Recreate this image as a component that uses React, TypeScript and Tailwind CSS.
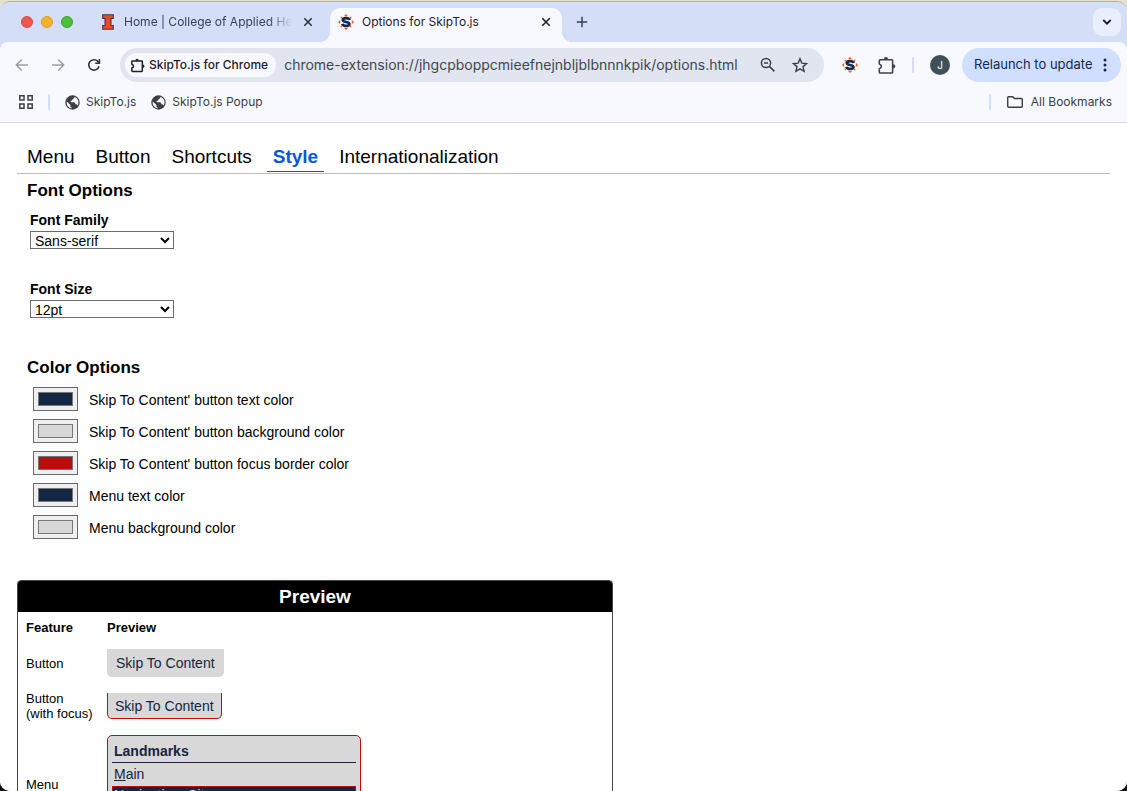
import React from 'react';

const CHROME_FONT = "font-['Inter','Roboto',sans-serif]";
const PAGE_FONT = "font-['Liberation_Sans',Arial,sans-serif]";

function SkipToLogo() {
  return (
    <svg viewBox="0 0 16 16" className="size-4 shrink-0" aria-hidden="true">
      <g fill="#ff5f05">
        <path d="M8 0 L10.200 2.200 H5.800 Z" />
        <path d="M8 16 L10.200 13.800 H5.800 Z" />
        <path d="M0 8 L2.200 5.800 V10.200 Z" />
        <path d="M16 8 L13.800 5.800 V10.200 Z" />
        <path d="M2.600 2.800h1.400v1.400H2.600zM12 2.800h1.400v1.400H12zM2.600 11.800h1.400v1.400H2.600zM12 11.800h1.400v1.400H12z" />
      </g>
      <path
        d="M11.600 6C11.300 4.700 10 4.200 8 4.200 6 4.200 4.800 4.800 4.800 6c0 2.700 6.600 1.200 6.600 4 0 1.200-1.500 1.900-3.400 1.900-2.100 0-3.300-.7-3.700-2"
        fill="none"
        stroke="#13294b"
        strokeWidth="2.700"
      />
    </svg>
  );
}

function IllinoisLogo() {
  return (
    <svg viewBox="0 0 12 16" className="h-4 w-3 shrink-0" aria-hidden="true">
      <path
        d="M.7.7h10.600v3.800H9v7h2.300v3.800H.7v-3.800H3v-7H.7z"
        fill="#e84a27"
        stroke="#3d3a55"
        strokeWidth="1.100"
      />
    </svg>
  );
}

function PuzzleIcon({ className, width }: { className: string; width: number }) {
  return (
    <svg viewBox="0 0 18 18" className={className} fill="none" stroke="currentColor" strokeWidth={width} aria-hidden="true">
      <path
        d="M3 3.500h11q.8 0 .8.800v11q0 .8-.8.800H3q-.8 0-.8-.8v-3.200q2-.6 2-2.300t-2-2.300V4.300q0-.8.800-.8z"
        strokeLinejoin="round"
      />
      <path d="M6.500 3.200a2 2.200 0 0 1 4 0zM15.200 7.800a2.200 2 0 0 1 0 4z" fill="currentColor" stroke="none" />
    </svg>
  );
}

function GlobeIcon() {
  return (
    <svg viewBox="0 0 16 16" className="size-[15px] shrink-0" aria-hidden="true">
      <circle cx="8" cy="8" r="7.700" fill="#3b3e44" />
      <path
        d="M9.900 1.900c.3 1.500-.6 2.300-1.800 2.500-.3 1.200-.8 1.600-2 1.700v1.700H9.500c1.100 0 1.500.8 1.500 2h1.200l1.200 1.500a6.300 6.300 0 0 0-3.500-9.400zM1.900 6.800l3.900 3.900v1.300c0 .8.600 1.300 1.300 1.400v1A6.300 6.300 0 0 1 1.900 6.800z"
        fill="#f8f9ff"
      />
    </svg>
  );
}

function CloseIcon() {
  return (
    <svg viewBox="0 0 10 10" className="size-[10px]" stroke="currentColor" strokeWidth="1.600" aria-hidden="true">
      <path d="M1.300 1.300l7.400 7.400M8.700 1.300L1.300 8.700" />
    </svg>
  );
}

function TabStrip() {
  return (
    <header className="flex h-10 shrink-0 items-end bg-[#d4def6] pl-[21px] pr-[6px] text-xs">
      <div className="flex h-10 items-center gap-2">
        <button aria-label="Close window" className="size-3 rounded-full border border-[#dd4a43] bg-[#ed5750]" />
        <button aria-label="Minimize window" className="size-3 rounded-full border border-[#dd9a20] bg-[#f5b32d]" />
        <button aria-label="Zoom window" className="size-3 rounded-full border border-[#3aa52c] bg-[#4cc038]" />
      </div>
      <div className="ml-[29px] flex h-10 w-[228px] items-center">
        <IllinoisLogo />
        <span className="ml-[10px] w-[168px] overflow-hidden whitespace-nowrap text-[#3b4154] [mask-image:linear-gradient(to_right,black_86%,transparent)]">
          Home | College of Applied Health
        </span>
        <button aria-label="Close tab" className="ml-[11px] text-[#30343c]">
          <CloseIcon />
        </button>
      </div>
      <div className="relative flex h-[34px] w-[232px] items-center rounded-t-[10px] bg-[#f8f9ff] pb-[6px] pl-2 pr-[11px] before:absolute before:-left-[10px] before:bottom-0 before:size-[10px] before:bg-[radial-gradient(circle_at_0_0,transparent_10px,#f8f9ff_10px)] after:absolute after:-right-[10px] after:bottom-0 after:size-[10px] after:bg-[radial-gradient(circle_at_100%_0,transparent_10px,#f8f9ff_10px)]">
        <SkipToLogo />
        <span className="ml-2 flex-1 whitespace-nowrap text-[#1f2127]">Options for SkipTo.js</span>
        <button aria-label="Close tab" className="text-[#1f2127]">
          <CloseIcon />
        </button>
      </div>
      <div className="flex h-10 flex-1 items-center justify-between pl-[14px]">
        <button aria-label="New tab" className="text-[#3b4154]">
          <svg viewBox="0 0 12 12" className="size-3" stroke="currentColor" strokeWidth="1.500" aria-hidden="true">
            <path d="M6 .8v10.400M.8 6h10.400" />
          </svg>
        </button>
        <button aria-label="Search tabs" className="flex size-7 items-center justify-center rounded-[9px] bg-[#e9effd] text-[#1a1c22]">
          <svg viewBox="0 0 10 8" className="h-2 w-[10px]" fill="none" stroke="currentColor" strokeWidth="1.800" aria-hidden="true">
            <path d="M1.300 2L5 5.700 8.700 2" />
          </svg>
        </button>
      </div>
    </header>
  );
}

function ArrowIcon({ back }: { back?: boolean }) {
  return (
    <svg viewBox="0 0 14 14" className="size-[14px]" fill="none" stroke="currentColor" strokeWidth="1.500" aria-hidden="true">
      {back ? <path d="M13 7H1.500M6.800 1.500L1.300 7l5.500 5.500" /> : <path d="M1 7h11.500M7.200 1.500L12.700 7l-5.500 5.500" />}
    </svg>
  );
}

function Toolbar() {
  return (
    <div className="flex h-[46px] items-center pl-[15px] pr-[6px]">
      <div className="flex gap-[22px]">
        <button aria-label="Back" className="text-[#9c9ea5]"><ArrowIcon back /></button>
        <button aria-label="Forward" className="text-[#9c9ea5]"><ArrowIcon /></button>
        <button aria-label="Reload" className="text-[#30343c]">
          <svg viewBox="0 0 14 14" className="size-[14px]" fill="none" stroke="currentColor" strokeWidth="1.600" aria-hidden="true">
            <path d="M12 8.200A5.200 5.200 0 1 1 10.800 3.400L12.200 4.900" />
            <path d="M12.400 1v4.200H8.200" />
          </svg>
        </button>
      </div>
      <div className="ml-[19px] flex h-[34px] min-w-0 flex-1 items-center rounded-full bg-[#e1e5f0] pl-[5px] pr-4">
        <button className="flex h-6 shrink-0 items-center gap-1 rounded-full bg-[#f8f9ff] pl-[5px] pr-2 text-xs font-medium whitespace-nowrap text-[#1f2127]">
          <PuzzleIcon className="size-[15px]" width={1.8} />
          SkipTo.js for Chrome
        </button>
        <input
          aria-label="Address"
          readOnly
          value="chrome-extension://jhgcpboppcmieefnejnbljblbnnnkpik/options.html"
          className="ml-2 min-w-0 flex-1 bg-transparent text-sm text-[#43474f] outline-none"
        />
        <div className="ml-4 flex gap-4 text-[#3b3e44]">
          <button aria-label="Page zoom">
            <svg viewBox="0 0 16 16" className="size-4" fill="none" stroke="currentColor" strokeWidth="1.500" aria-hidden="true">
              <circle cx="6" cy="6" r="4.600" />
              <path d="M9.400 9.400l5 5M4 6h4" />
            </svg>
          </button>
          <button aria-label="Bookmark this page">
            <svg viewBox="0 0 16 16" className="size-4" fill="none" stroke="currentColor" strokeWidth="1.400" aria-hidden="true">
              <path d="M8 1.700l1.800 4.400 4.800.4-3.600 3.100 1.100 4.700L8 11.800l-4.100 2.500L5 9.600 1.400 6.500l4.800-.4z" />
            </svg>
          </button>
        </div>
      </div>
      <div className="ml-[18px] flex shrink-0 items-center">
        <button aria-label="SkipTo.js"><SkipToLogo /></button>
        <button aria-label="Extensions" className="ml-[19px] text-[#3b4154]">
          <PuzzleIcon className="size-[19px]" width={1.5} />
        </button>
        <span className="ml-[16px] h-4 w-0.5 rounded bg-[#d0dfff]" />
        <button aria-label="Profile" className="ml-4 size-5 rounded-full bg-[#3f5059] text-[10px] text-white">J</button>
        <button className="ml-3 flex h-[34px] w-[159px] items-center justify-between rounded-full bg-[#d0deff] pl-3 pr-[14px] text-[13px] whitespace-nowrap text-[#14284e]">
          Relaunch to update
          <svg viewBox="0 0 4 14" className="h-[14px] w-1" fill="currentColor" aria-hidden="true">
            <circle cx="2" cy="2" r="1.500" />
            <circle cx="2" cy="7" r="1.500" />
            <circle cx="2" cy="12" r="1.500" />
          </svg>
        </button>
      </div>
    </div>
  );
}

function BookmarksBar() {
  return (
    <nav aria-label="Bookmarks" className="flex h-[34px] items-start pl-[19px] pr-[15px] text-xs leading-4 text-[#3b3e44]">
      <div className="flex h-7 flex-1 items-center">
        <button aria-label="Tab groups">
          <svg viewBox="0 0 14 14" className="size-[14px]" fill="none" stroke="currentColor" strokeWidth="1.500" aria-hidden="true">
            <path d="M.8.8h4.200v4.200H.8zM9 .8h4.200v4.200H9zM.8 9h4.200v4.200H.8zM9 9h4.200v4.200H9z" />
          </svg>
        </button>
        <span className="ml-[15px] h-4 w-0.5 rounded bg-[#d0dfff]" />
        <a href="#skipto" className="ml-[15px] flex items-center gap-[6px]"><GlobeIcon />SkipTo.js</a>
        <a href="#popup" className="ml-[15px] flex items-center gap-[6px]"><GlobeIcon />SkipTo.js Popup</a>
      </div>
      <div className="flex h-7 items-center">
        <span className="h-4 w-0.5 rounded bg-[#d0dfff]" />
        <a href="#all" className="ml-4 flex items-center gap-2">
          <svg viewBox="0 0 16 12" className="h-3 w-4" fill="none" stroke="currentColor" strokeWidth="1.400" aria-hidden="true">
            <path d="M1.500.8h4.300l1.600 1.700h7q.9 0 .9.900v6.900q0 .9-.9.900h-12.800q-.9 0-.9-.9V1.700q0-.9.800-.9z" />
          </svg>
          All Bookmarks
        </a>
      </div>
    </nav>
  );
}

const TABS = ['Menu', 'Button', 'Shortcuts', 'Style', 'Internationalization'];

const COLORS = [
  { id: 'button-text', label: "Skip To Content' button text color", value: '#142643' },
  { id: 'button-background', label: "Skip To Content' button background color", value: '#d8d8d8' },
  { id: 'button-focus', label: "Skip To Content' button focus border color", value: '#c00b0d' },
  { id: 'menu-text', label: 'Menu text color', value: '#142643' },
  { id: 'menu-background', label: 'Menu background color', value: '#d8d8d8' },
];

function SelectField({ id, label, options }: { id: string; label: string; options: string[] }) {
  return (
    <div className="flex flex-col items-start">
      <label htmlFor={id} className="text-sm leading-[22px] font-bold">{label}</label>
      <select id={id} className="h-[18px] w-36 border border-[#6b6b6b] bg-white text-sm leading-4">
        {options.map((option) => <option key={option}>{option}</option>)}
      </select>
    </div>
  );
}

function Preview() {
  return (
    <section className="mt-[41px] w-[596px] max-w-full rounded-[4px] border border-[#444]">
      <h2 className="rounded-t-[3px] bg-black text-center text-[19px] leading-[31px] font-bold text-white">Preview</h2>
      <table className="w-full text-left text-[13px] leading-[15px]">
        <thead>
          <tr className="h-[31px]">
            <th scope="col" className="w-[89px] pl-2">Feature</th>
            <th scope="col">Preview</th>
          </tr>
        </thead>
        <tbody>
          <tr className="h-[40px]">
            <td className="pl-2">Button</td>
            <td>
              <button className="block h-7 rounded-b-[5px] bg-[#d8d8d8] px-[9px] text-sm text-[#142643]">Skip To Content</button>
            </td>
          </tr>
          <tr className="h-[46px]">
            <td className="pl-2">Button<br />(with focus)</td>
            <td>
              <button className="block h-[26px] rounded-b-[5px] border border-t-0 border-[#c00b0d] bg-[#d8d8d8] px-[7px] text-sm text-[#142643]">
                Skip To Content
              </button>
            </td>
          </tr>
          <tr className="h-[110px]">
            <td className="pl-2">Menu</td>
            <td>
              <div className="h-[98px] w-[254px] rounded-[5px] border border-[#c00b0d] bg-[#d8d8d8] p-1 text-sm text-[#142643]">
                <div className="border-b border-[#142643] px-0.5 py-px leading-5 font-bold">Landmarks</div>
                <div className="px-0.5 leading-[23px]"><u>M</u>ain</div>
                <div className="border border-[#c00b0d] bg-[#142643] px-px leading-4 text-[#d8d8d8]"><u>N</u>avigation: Site</div>
              </div>
            </td>
          </tr>
        </tbody>
      </table>
    </section>
  );
}

function OptionsPage() {
  return (
    <main className={`min-h-0 flex-1 overflow-hidden bg-white px-[17px] pt-5 text-black ${PAGE_FONT}`}>
      <div role="tablist" className="flex gap-[9px] border-b border-[#bdbdbd] pb-px pl-1 text-[19px] leading-7">
        {TABS.map((tab) => (
          <button
            key={tab}
            role="tab"
            aria-selected={tab === 'Style'}
            className={tab === 'Style' ? 'border-b border-[#0557e0] px-[6px] font-bold text-[#0557e0]' : 'border-b border-transparent px-[6px]'}
          >
            {tab}
          </button>
        ))}
      </div>
      <h2 className="mt-[7px] pl-[10px] text-[17px] leading-5 font-bold">Font Options</h2>
      <div className="mt-2 flex flex-col gap-[29px] pl-[13px]">
        <SelectField id="font-family" label="Font Family" options={['Sans-serif', 'Serif', 'Monospace']} />
        <SelectField id="font-size" label="Font Size" options={['12pt', '14pt', '16pt']} />
      </div>
      <h2 className="mt-10 pl-[10px] text-[17px] leading-5 font-bold">Color Options</h2>
      <div className="mt-[9px] flex flex-col gap-2 pl-4">
        {COLORS.map((color) => (
          <div key={color.id} className="flex items-end gap-[11px]">
            <input
              id={color.id}
              type="color"
              defaultValue={color.value}
              className="h-6 w-[45px] border border-[#6b6b6b] bg-[#efefef] px-0.5"
            />
            <label htmlFor={color.id} className="text-sm leading-[22px]">{color.label}</label>
          </div>
        ))}
      </div>
      <Preview />
    </main>
  );
}

export default function App() {
  return (
    <div className="flex h-screen flex-col bg-[linear-gradient(#e4e1cf_50%,#111_50%)] pt-px">
      <div className={`flex min-h-0 flex-1 flex-col overflow-hidden rounded-[10px] border-t border-[#b3b2a8] bg-[#d4def6] ${CHROME_FONT}`}>
        <TabStrip />
        <div className="shrink-0 rounded-t-[8px] border-b border-[#d9dae6] bg-[#f8f9ff]">
          <Toolbar />
          <BookmarksBar />
        </div>
        <OptionsPage />
      </div>
    </div>
  );
}
